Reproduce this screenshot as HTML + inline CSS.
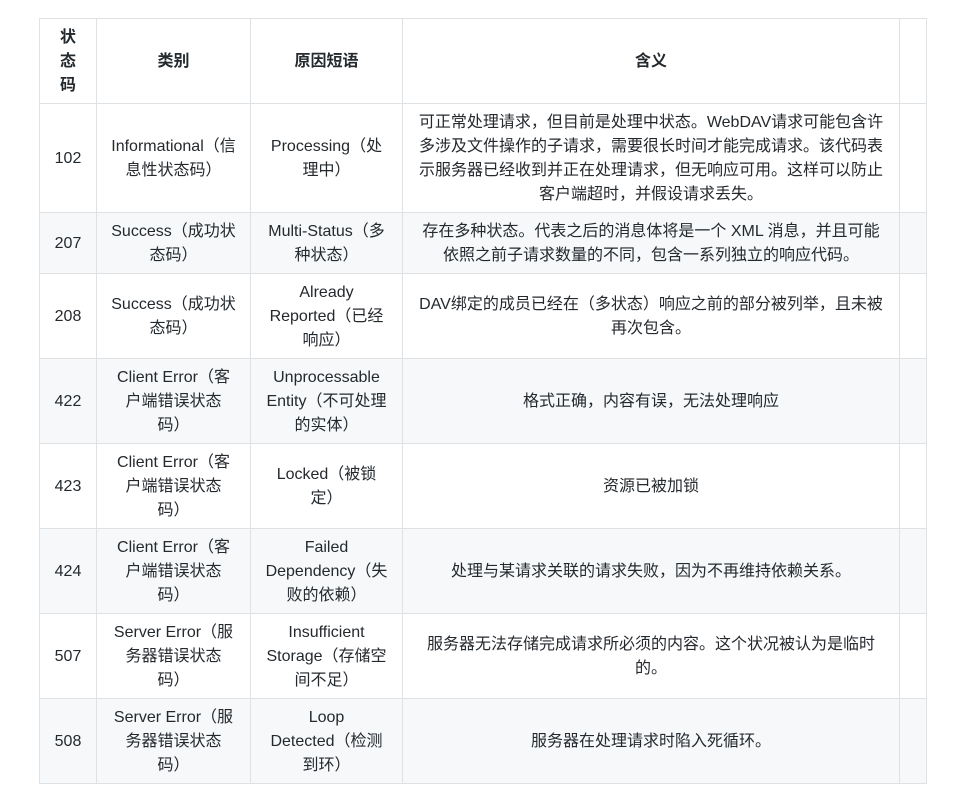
<!DOCTYPE html>
<html><head><meta charset="utf-8"><style>
body{margin:0;background:#fff;font-family:"Liberation Sans","Noto Sans CJK SC",sans-serif;color:#24292e;font-size:16px;}
table{position:absolute;left:39px;top:18px;border-collapse:collapse;table-layout:fixed;}
td,th{border:1px solid #dfe2e5;text-align:center;vertical-align:middle;line-height:24px;padding:2px 2px 0;white-space:nowrap;overflow:hidden;}
th{font-weight:bold;}
tr.g td{background:#f6f8fa;}
</style></head><body>
<table>
<colgroup><col style="width:57px"><col style="width:154px"><col style="width:152px"><col style="width:497px"><col style="width:27px"></colgroup>
<tr style="height:85px"><th>状<br>态<br>码</th><th>类别</th><th>原因短语</th><th>含义</th><th></th></tr>
<tr style="height:109px"><td>102</td><td>Informational（信<br>息性状态码）</td><td>Processing（处<br>理中）</td><td>可正常处理请求，但目前是处理中状态。WebDAV请求可能包含许<br>多涉及文件操作的子请求，需要很长时间才能完成请求。该代码表<br>示服务器已经收到并正在处理请求，但无响应可用。这样可以防止<br>客户端超时，并假设请求丢失。</td><td></td></tr>
<tr class="g" style="height:61px"><td>207</td><td>Success（成功状<br>态码）</td><td>Multi-Status（多<br>种状态）</td><td>存在多种状态。代表之后的消息体将是一个 XML 消息，并且可能<br>依照之前子请求数量的不同，包含一系列独立的响应代码。</td><td></td></tr>
<tr style="height:85px"><td>208</td><td>Success（成功状<br>态码）</td><td>Already<br>Reported（已经<br>响应）</td><td>DAV绑定的成员已经在（多状态）响应之前的部分被列举，且未被<br>再次包含。</td><td></td></tr>
<tr class="g" style="height:85px"><td>422</td><td>Client Error（客<br>户端错误状态<br>码）</td><td>Unprocessable<br>Entity（不可处理<br>的实体）</td><td>格式正确，内容有误，无法处理响应</td><td></td></tr>
<tr style="height:85px"><td>423</td><td>Client Error（客<br>户端错误状态<br>码）</td><td>Locked（被锁<br>定）</td><td>资源已被加锁</td><td></td></tr>
<tr class="g" style="height:85px"><td>424</td><td>Client Error（客<br>户端错误状态<br>码）</td><td>Failed<br>Dependency（失<br>败的依赖）</td><td>处理与某请求关联的请求失败，因为不再维持依赖关系。</td><td></td></tr>
<tr style="height:85px"><td>507</td><td>Server Error（服<br>务器错误状态<br>码）</td><td>Insufficient<br>Storage（存储空<br>间不足）</td><td>服务器无法存储完成请求所必须的内容。这个状况被认为是临时<br>的。</td><td></td></tr>
<tr class="g" style="height:85px"><td>508</td><td>Server Error（服<br>务器错误状态<br>码）</td><td>Loop<br>Detected（检测<br>到环）</td><td>服务器在处理请求时陷入死循环。</td><td></td></tr>
</table>
</body></html>
